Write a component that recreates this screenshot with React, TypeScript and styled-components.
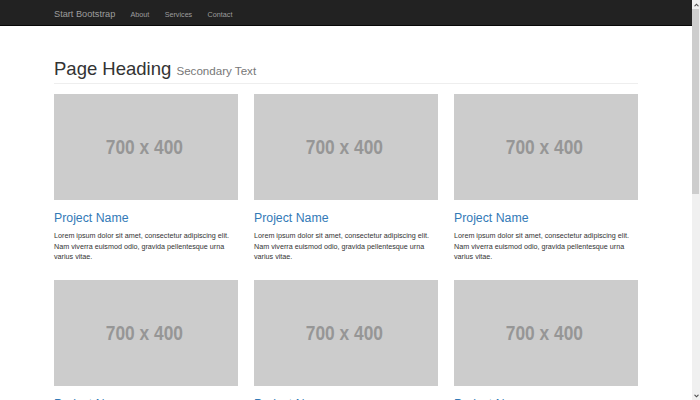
import React from "react";
import styled, { createGlobalStyle } from "styled-components";

const Global = createGlobalStyle`
  html, body { margin: 0; padding: 0; background: #fff; }
  body { font-family: "Liberation Sans", Arial, Helvetica, sans-serif; color: #333; overflow: hidden; }
  * { box-sizing: border-box; }
`;

const Frame = styled.div`
  display: flex;
  width: 700px;
  height: 400px;
  overflow: hidden;
`;

const Page = styled.div`
  flex: 1;
  min-width: 0;
  height: 400px;
  overflow: hidden;
`;

const Navbar = styled.nav`
  height: 26px;
  background: #222;
  border-bottom: 1px solid #080808;
`;

const NavInner = styled.div`
  width: 584px;
  margin: 0 auto;
  height: 25px;
  display: flex;
  align-items: flex-start;
`;

const Brand = styled.a`
  font-size: 9.2px;
  line-height: 10px;
  padding-top: 9.2px;
  margin-right: 15.2px;
  color: #9d9d9d;
  text-decoration: none;
  white-space: nowrap;
`;

const NavLinks = styled.ul`
  list-style: none;
  margin: 0;
  padding: 0;
  display: flex;
  gap: 15.4px;
`;

const NavLink = styled.a`
  display: block;
  font-size: 7.2px;
  line-height: 10px;
  padding-top: 10.1px;
  color: #9d9d9d;
  text-decoration: none;
  white-space: nowrap;
`;

const Container = styled.main`
  width: 584px;
  margin: 0 auto;
`;

const Header = styled.div`
  margin-top: 33px;
  padding-bottom: 3.6px;
  border-bottom: 1px solid #eee;
`;

const H1 = styled.h1`
  margin: 0;
  font-size: 18.5px;
  line-height: 1.1;
  font-weight: 400;
  color: #333;
`;

const Small = styled.small`
  font-size: 11.6px;
  color: #777;
  font-weight: 400;
`;

const Grid = styled.div`
  margin-top: 10px;
  display: grid;
  grid-template-columns: repeat(3, 184px);
  column-gap: 16px;
  row-gap: 17.7px;
`;

const Card = styled.div`
  display: flex;
  flex-direction: column;
`;

const Placeholder = styled.div`
  height: 106px;
  background: #ccc;
  display: flex;
  align-items: center;
  justify-content: center;
  padding: 2px 3px 0 0;
`;

const PlaceholderLabel = styled.span`
  display: inline-block;
  color: #969696;
  font-family: "Liberation Sans", Arial, sans-serif;
  font-weight: 700;
  font-size: 19.5px;
  line-height: 1;
  white-space: nowrap;
  transform: scaleX(0.89);
`;

const Title = styled.h3`
  margin: 12.5px 0 0;
  font-size: 12.3px;
  line-height: 1.1;
  font-weight: 400;
  color: #337ab7;
`;

const Text = styled.p`
  margin: 5.5px 0 0;
  font-size: 7.2px;
  line-height: 10.26px;
  color: #333;
`;

const ScrollTrack = styled.div`
  width: 8px;
  height: 400px;
  background: #f0f0f0;
  display: flex;
  flex-direction: column;
  align-items: stretch;
`;

const ScrollArrow = styled.div`
  height: 9px;
  display: flex;
  align-items: center;
  justify-content: center;
`;

const ScrollThumb = styled.div`
  height: 185px;
  margin-right: 1px;
  background: #cdcdcd;
`;

const ScrollRest = styled.div`
  flex: 1;
`;

const lorem =
  "Lorem ipsum dolor sit amet, consectetur adipiscing elit. Nam viverra euismod odio, gravida pellentesque urna varius vitae.";

const Arrow = ({ down }: { down?: boolean }) => (
  <svg width="5" height="4" viewBox="0 0 5 4">
    {down ? (
      <path d="M0 1 L2.5 3.5 L5 1 L4 0.5 L2.5 2 L1 0.5 Z" fill="#505050" />
    ) : (
      <path d="M0 3 L2.5 0.5 L5 3 L4 3.5 L2.5 2 L1 3.5 Z" fill="#505050" />
    )}
  </svg>
);

export default function App() {
  const items = Array.from({ length: 6 });
  return (
    <>
      <Global />
      <Frame>
        <Page>
          <Navbar>
            <NavInner>
              <Brand href="#">Start Bootstrap</Brand>
              <NavLinks>
                <li><NavLink href="#">About</NavLink></li>
                <li><NavLink href="#">Services</NavLink></li>
                <li><NavLink href="#">Contact</NavLink></li>
              </NavLinks>
            </NavInner>
          </Navbar>
          <Container>
            <Header>
              <H1>
                Page Heading <Small>Secondary Text</Small>
              </H1>
            </Header>
            <Grid>
              {items.map((_, i) => (
                <Card key={i}>
                  <Placeholder>
                    <PlaceholderLabel>700 x 400</PlaceholderLabel>
                  </Placeholder>
                  <Title>Project Name</Title>
                  <Text>{lorem}</Text>
                </Card>
              ))}
            </Grid>
          </Container>
        </Page>
        <ScrollTrack>
          <ScrollArrow><Arrow /></ScrollArrow>
          <ScrollThumb />
          <ScrollRest />
          <ScrollArrow><Arrow down /></ScrollArrow>
        </ScrollTrack>
      </Frame>
    </>
  );
}
